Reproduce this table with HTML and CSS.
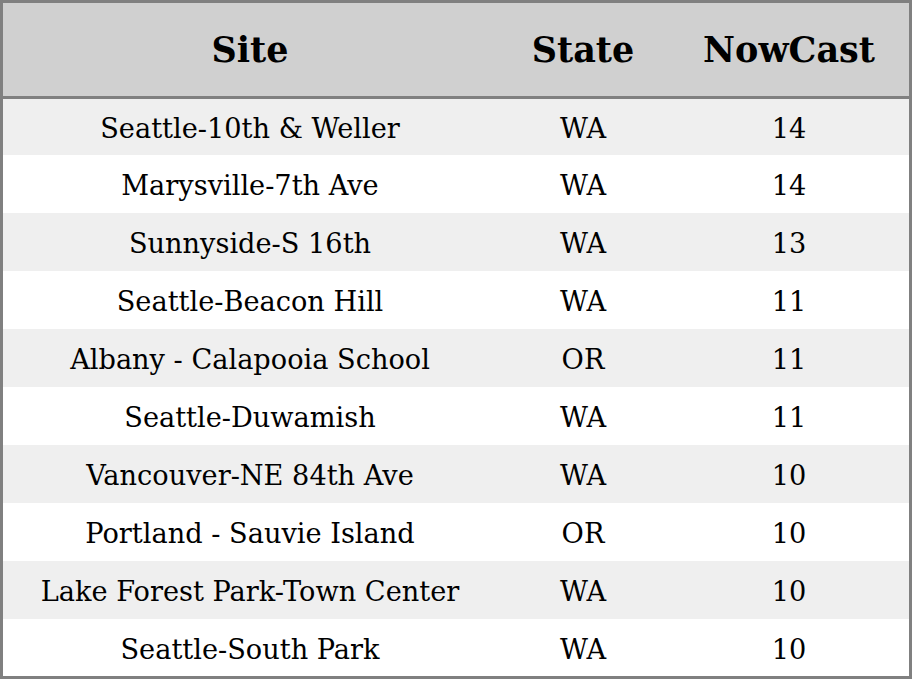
FILE: index.html
```html
<!DOCTYPE html>
<html>
<head>
<meta charset="utf-8">
<link rel="stylesheet" href="styles.css">
</head>
<body>
<table class="aq">
  <colgroup>
    <col class="c-site">
    <col class="c-state">
    <col class="c-now">
  </colgroup>
  <thead>
    <tr><th>Site</th><th>State</th><th>NowCast</th></tr>
  </thead>
  <tbody>
    <tr><td>Seattle-10th &amp; Weller</td><td>WA</td><td>14</td></tr>
    <tr><td>Marysville-7th Ave</td><td>WA</td><td>14</td></tr>
    <tr><td>Sunnyside-S 16th</td><td>WA</td><td>13</td></tr>
    <tr><td>Seattle-Beacon Hill</td><td>WA</td><td>11</td></tr>
    <tr><td>Albany - Calapooia School</td><td>OR</td><td>11</td></tr>
    <tr><td>Seattle-Duwamish</td><td>WA</td><td>11</td></tr>
    <tr><td>Vancouver-NE 84th Ave</td><td>WA</td><td>10</td></tr>
    <tr><td>Portland - Sauvie Island</td><td>OR</td><td>10</td></tr>
    <tr><td>Lake Forest Park-Town Center</td><td>WA</td><td>10</td></tr>
    <tr><td>Seattle-South Park</td><td>WA</td><td>10</td></tr>
  </tbody>
</table>
</body>
</html>
```
FILE: styles.css
```css
html, body {
  margin: 0;
  padding: 0;
  background: #ffffff;
}
.aq {
  width: 912px;
  border-collapse: separate;
  border-spacing: 0;
  border: 3px solid #808080;
  table-layout: fixed;
  font-family: "DejaVu Serif", serif;
  color: #000;
}
.c-site { width: 494px; }
.c-state { width: 172px; }
.c-now { width: 240px; }
.aq th {
  background: #d0d0d0;
  height: 93px;
  padding: 0;
  font-size: 35px;
  font-weight: bold;
  text-align: center;
  border-bottom: 3px solid #808080;
}
.aq td {
  height: 58px;
  padding: 3px 0 0;
  box-sizing: border-box;
  font-size: 27.2px;
  text-align: center;
}
.aq tbody tr:first-child td {
  height: 56px;
}
.aq tbody tr:last-child td {
  height: 57px;
}
.aq tbody tr:nth-child(odd) td {
  background: #efefef;
}
```
